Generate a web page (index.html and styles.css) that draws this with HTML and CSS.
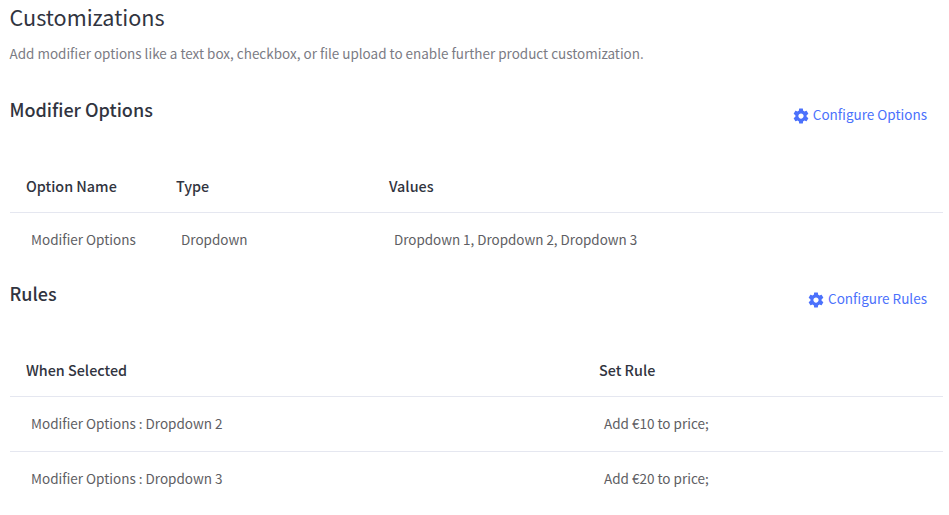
FILE: index.html
```html
<!DOCTYPE html>
<html lang="en">
<head>
<meta charset="utf-8">
<title>Customizations</title>
<link rel="stylesheet" href="styles.css">
</head>
<body>
<svg class="sprite" aria-hidden="true">
<symbol id="gear" viewBox="0 0 24 24"><path d="M19.43 12.98c.04-.32.07-.64.07-.98s-.03-.66-.07-.98l2.11-1.65c.19-.15.24-.42.12-.64l-2-3.46c-.12-.22-.39-.3-.61-.22l-2.49 1c-.52-.4-1.08-.73-1.69-.98l-.38-2.65C14.46 2.18 14.25 2 14 2h-4c-.25 0-.46.18-.49.42l-.38 2.65c-.61.25-1.17.59-1.69.98l-2.49-1c-.23-.09-.49 0-.61.22l-2 3.46c-.13.22-.07.49.12.64l2.11 1.65c-.04.32-.07.65-.07.98s.03.66.07.98l-2.11 1.65c-.19.15-.24.42-.12.64l2 3.46c.12.22.39.3.61.22l2.49-1c.52.4 1.08.73 1.69.98l.38 2.65c.03.24.24.42.49.42h4c.25 0 .46-.18.49-.42l.38-2.65c.61-.25 1.17-.59 1.69-.98l2.49 1c.23.09.49 0 .61-.22l2-3.46c.12-.22.07-.49-.12-.64l-2.11-1.65zM12 15.5c-1.93 0-3.5-1.57-3.5-3.5s1.57-3.5 3.5-3.5 3.5 1.57 3.5 3.5-1.57 3.5-3.5 3.5z"/></symbol>
</svg>
<main class="page">
<h1 class="title">Customizations</h1>
<p class="intro">Add modifier options like a text box, checkbox, or file upload to enable further product customization.</p>
<section class="section">
<header class="bar"><h2 class="heading">Modifier Options</h2><a class="action"><svg class="icon"><use href="#gear"/></svg><span class="label">Configure Options</span></a></header>
<div class="grid grid-options">
<div class="row head"><span>Option Name</span><span>Type</span><span>Values</span></div>
<div class="row"><span>Modifier Options</span><span>Dropdown</span><span class="values">Dropdown 1, Dropdown 2, Dropdown 3</span></div>
</div>
</section>
<section class="section">
<header class="bar"><h2 class="heading">Rules</h2><a class="action"><svg class="icon"><use href="#gear"/></svg><span class="label">Configure Rules</span></a></header>
<div class="grid grid-rules">
<div class="row head"><span>When Selected</span><span>Set Rule</span></div>
<div class="row"><span>Modifier Options : Dropdown 2</span><span>Add €10 to price;</span></div>
<div class="row"><span>Modifier Options : Dropdown 3</span><span>Add €20 to price;</span></div>
</div>
</section>
</main>
</body>
</html>
```
FILE: styles.css
```css
* { box-sizing: border-box; }
body { margin: 0; background: #fff; color: #5e5e63; font: 13.5px/20px "Noto Sans CJK SC", sans-serif; }
.sprite { display: none; }
.page { padding: 3px 6px 0 9.5px; }
.title { margin: 0; font-size: 21.6px; line-height: 28px; font-weight: 400; color: #313440; }
.intro { margin: 12px 0 0; font-size: 13.47px; color: #7b7b84; }
.section { padding-bottom: 13px; }
.section + .section { padding-bottom: 0; }
.intro + .section { margin-top: 33px; }
.bar { display: flex; justify-content: space-between; height: 66px; padding-right: 16px; }
.heading { margin: -1px 0 0; font-size: 18px; line-height: 28px; font-weight: 500; color: #313440; }
.action { display: flex; align-items: center; height: 20px; margin-top: 9px; color: #4b71fc; }
.icon { width: 18px; height: 18px; margin: 1px 3px 0 0; fill: #4b71fc; }
.label { padding-bottom: 2px; }
.row { display: grid; height: 55px; align-items: center; padding: 0 0 3px 21px; border-top: 1px solid #e5e7f0; }
.head { height: 50px; padding: 0 0 2px 16px; border-top: 0; font-size: 14.35px; font-weight: 500; color: #313440; }
.values { font-size: 13.43px; }
.grid { margin-left: 0.5px; }
.grid-options .row { grid-template-columns: 150px 213px 1fr; }
.grid-rules .row { grid-template-columns: 573px 1fr; }
```
